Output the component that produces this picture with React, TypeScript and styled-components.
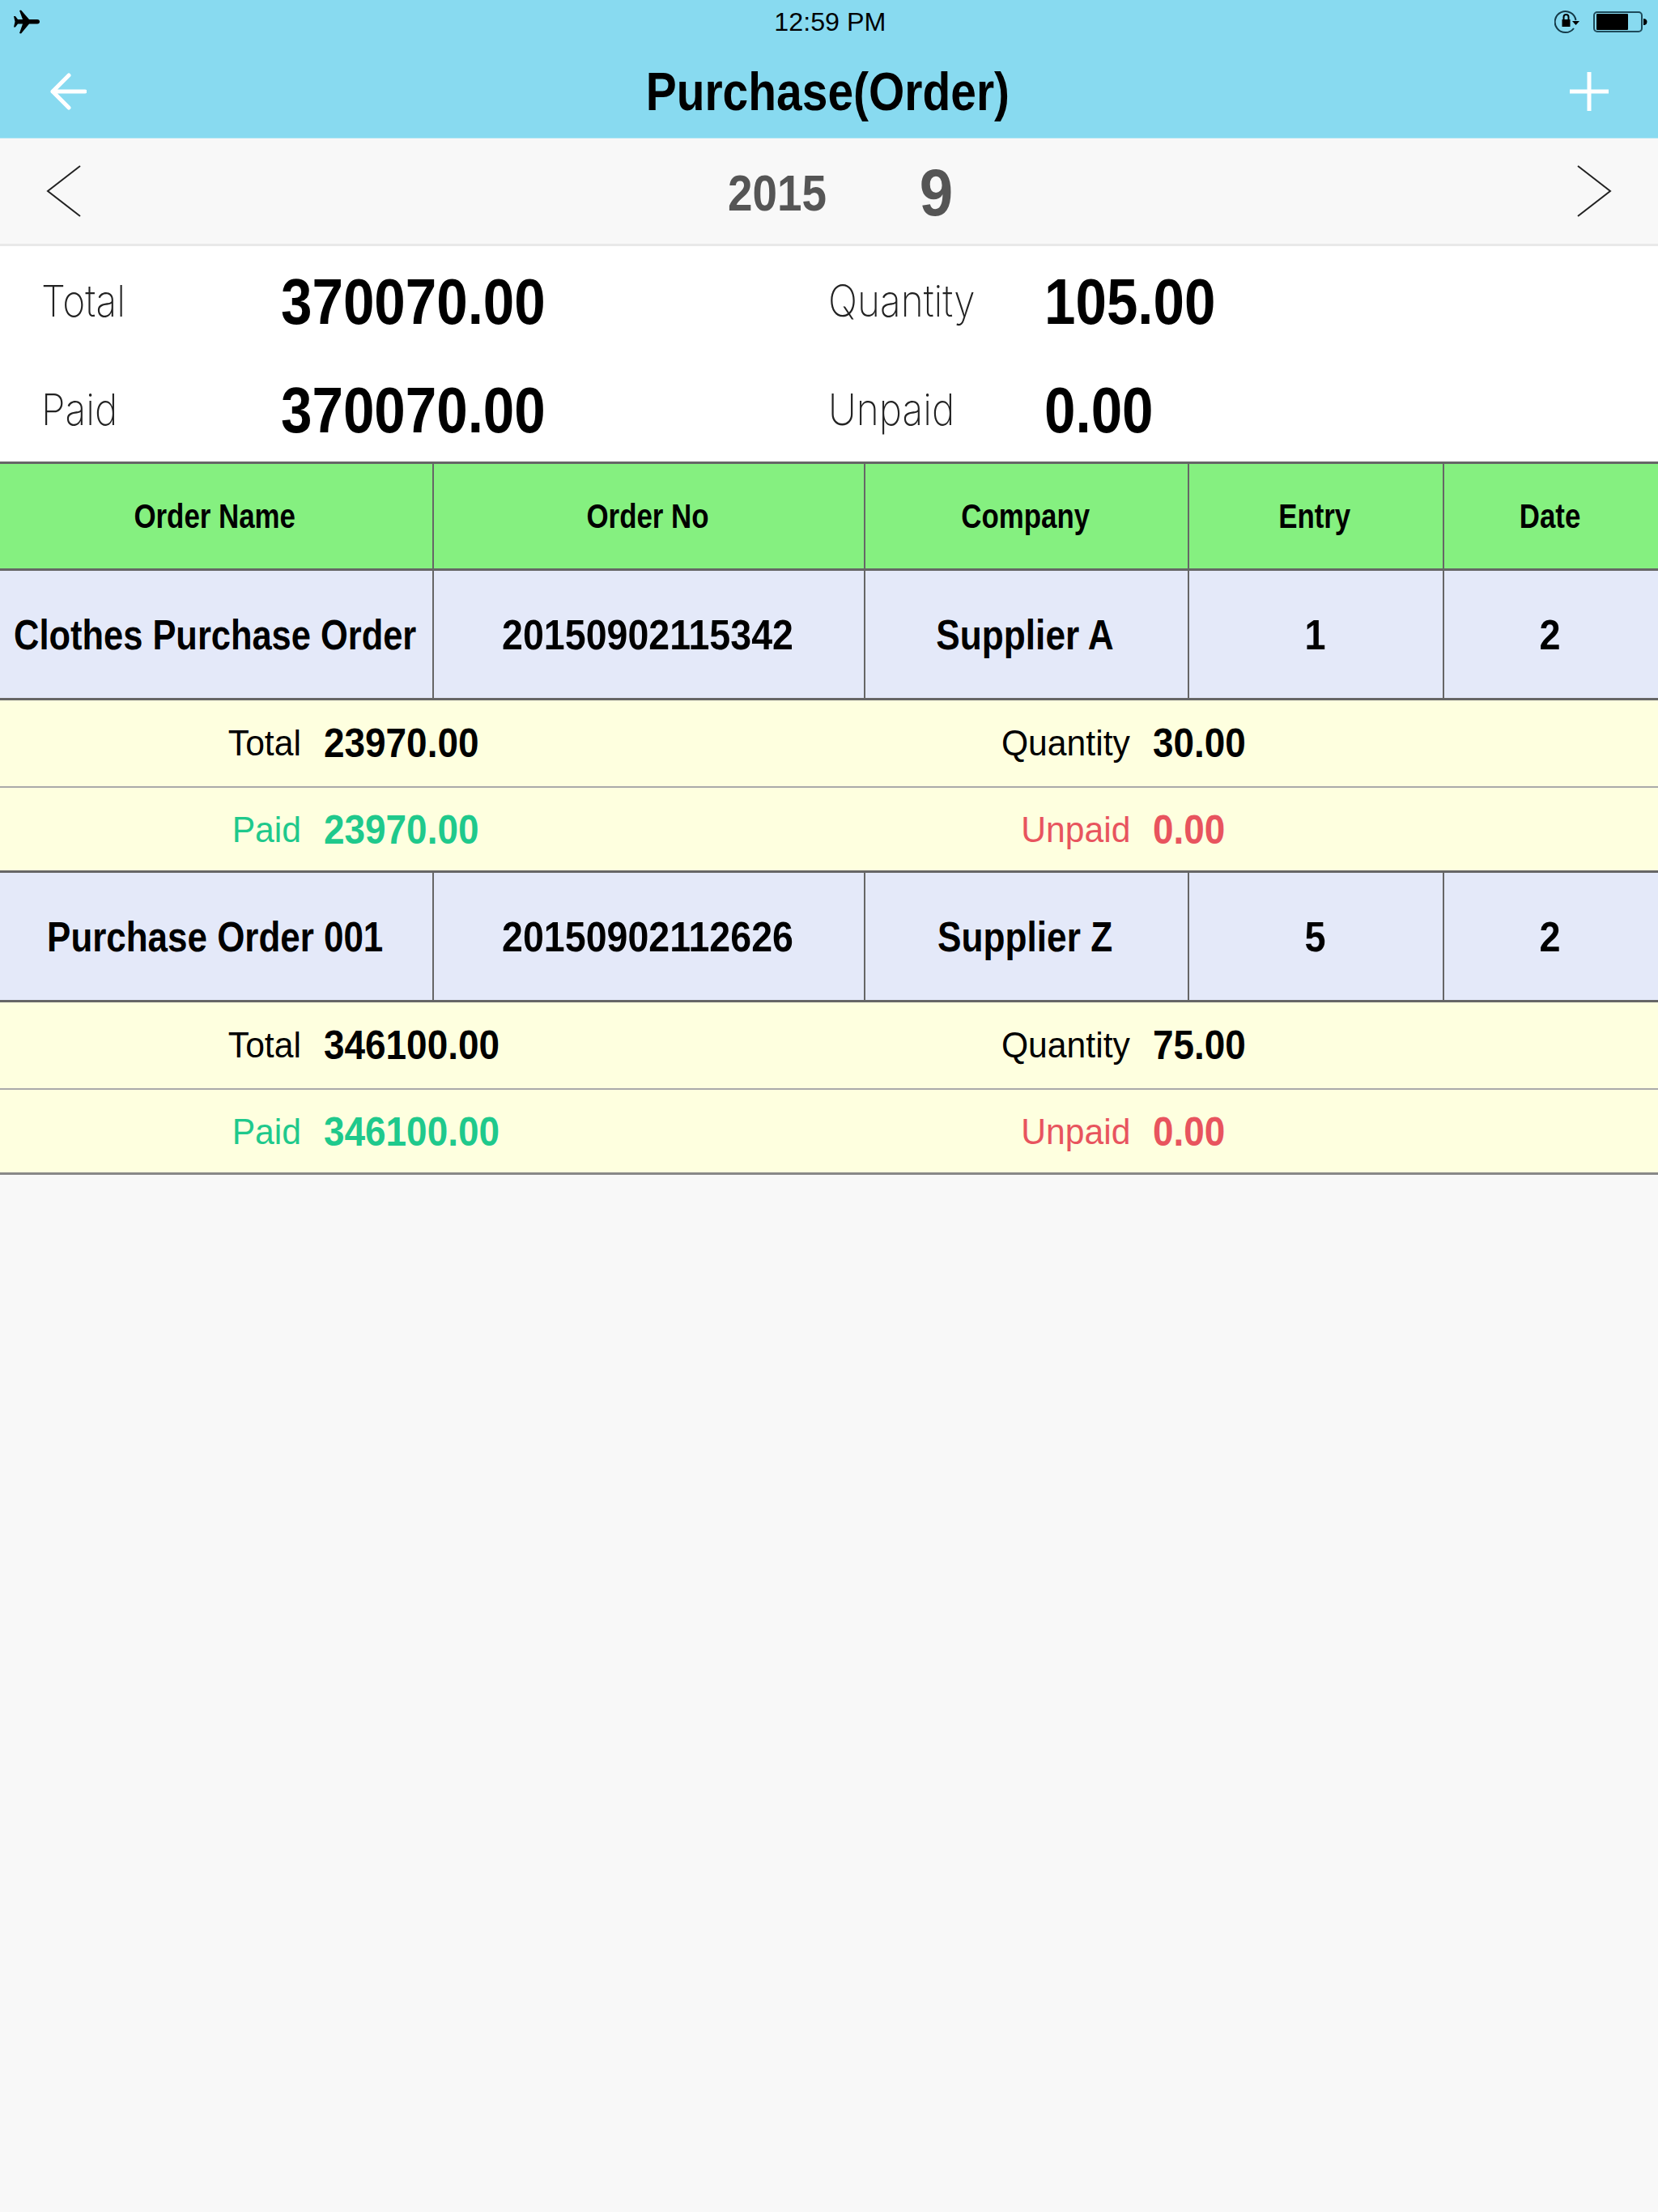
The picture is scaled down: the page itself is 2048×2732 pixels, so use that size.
import React from "react";
import styled, { createGlobalStyle } from "styled-components";

const Global = createGlobalStyle`
  html, body { margin: 0; padding: 0; background: #f8f8f8; }
  body { font-family: "Liberation Sans", Arial, sans-serif; color: #000; }
  * { box-sizing: border-box; }
`;

const Page = styled.div`
  width: 2048px;
  min-height: 2732px;
  background: #f8f8f8;
`;

const Top = styled.header`
  height: 171px;
  background: #88daf0;
  border-bottom: 1px solid #a9e3f3;
`;

const StatusBar = styled.div`
  height: 56px;
  padding: 12px 13px 0 16px;
  display: flex;
  align-items: flex-start;
`;

const StatusSide = styled.div<{ $right?: boolean }>`
  flex: 1;
  display: flex;
  align-items: flex-start;
  justify-content: ${(p) => (p.$right ? "flex-end" : "flex-start")};
  gap: 15px;
`;

const BatteryWrap = styled.div`
  margin-top: 2px;
`;

const NavBar = styled.div`
  height: 114px;
  padding: 0 60px 0 61px;
  display: flex;
  align-items: center;
  justify-content: space-between;
`;

const Squeezed = styled.span<{ $sx: number; $origin?: string }>`
  display: inline-block;
  white-space: nowrap;
  transform: scaleX(${(p) => p.$sx});
  transform-origin: ${(p) => p.$origin ?? "center"} center;
`;

const Clock = styled(Squeezed)`
  font-size: 31px;
  line-height: 36px;
  margin-top: -2px;
`;

const Title = styled(Squeezed)`
  font-size: 67px;
  line-height: 80px;
  font-weight: 700;
`;

const DateBar = styled.div`
  height: 133px;
  padding: 0 56px 0 56px;
  display: flex;
  align-items: center;
  justify-content: space-between;
  border-bottom: 3px solid #e9e9e9;
`;

const DateCenter = styled.div`
  display: flex;
  align-items: center;
  justify-content: center;
  gap: 103px;
  padding: 4px 0 0 21px;
  color: #555;
  font-weight: 700;
`;

const Year = styled(Squeezed)`
  font-size: 63px;
  line-height: 70px;
`;

const Month = styled(Squeezed)`
  font-size: 81px;
  line-height: 90px;
`;

const Summary = styled.section`
  background: #fff;
  padding: 24px 0 18px 51px;
  display: grid;
  grid-template-columns: 296px 676px 267px 1fr;
  grid-template-rows: 90px 90px;
  row-gap: 44px;
  align-items: center;
`;

const SummaryLabel = styled(Squeezed)`
  font-family: Inter, Roboto, "Liberation Sans", sans-serif;
  font-weight: 200;
  font-size: 54px;
  line-height: 60px;
  margin-top: -3px;
  color: #222;
`;

const SummaryValue = styled(Squeezed)`
  font-size: 80px;
  line-height: 90px;
  font-weight: 700;
`;

const TableRow = styled.div<{ $header?: boolean }>`
  display: grid;
  grid-template-columns: 534px 533px 400px 315px 1fr;
  height: ${(p) => (p.$header ? 132 : 160)}px;
  background: ${(p) => (p.$header ? "#85f080" : "#e4e9f9")};
  border-top: 3px solid #666;
`;

const Cell = styled.div`
  display: flex;
  align-items: center;
  justify-content: center;
  padding-right: 3px;
  border-left: 2px solid #666;
  &:first-child { border-left: 0; }
`;

const HeadText = styled(Squeezed)`
  font-size: 42px;
  font-weight: 700;
`;

const CellText = styled(Squeezed)`
  font-size: 52px;
  font-weight: 700;
`;

const Detail = styled.div<{ $h: number; $pad: number; $color: string; $border: string }>`
  height: ${(p) => p.$h}px;
  padding-top: ${(p) => p.$pad}px;
  display: grid;
  grid-template-columns: 372px 652px 372px 1fr;
  align-items: center;
  background: #feffdf;
  color: ${(p) => p.$color};
  border-top: ${(p) => p.$border};
`;

const DetailLabel = styled.div<{ $color?: string }>`
  font-size: 44px;
  text-align: right;
  color: ${(p) => p.$color ?? "inherit"};
`;

const DetailValue = styled.div<{ $color?: string }>`
  padding-left: 28px;
  font-size: 50px;
  font-weight: 700;
  color: ${(p) => p.$color ?? "inherit"};
`;

const Foot = styled.div`
  height: 3px;
  background: #888;
`;

const Airplane = () => (
  <svg width="34" height="31" viewBox="16 12 34 31">
    <path
      d="M49 26.700c0-1.500-1-2.700-3-2.700L36 24 26 12.500 24 13l4 11h-6l-3-4h-2l1.500 6.700L17 33.500h2l3-4h6L24 41l2 .5 10-12h10c2 0 3-1.200 3-2.800z"
      fill="#000"
    />
  </svg>
);

const OrientationLock = () => (
  <svg width="33" height="30" viewBox="0 0 33 30">
    <path d="M26.500 13A13 13 0 1 0 24 23" fill="none" stroke="#143a48" strokeWidth="2" />
    <path d="M22 14h9l-4.500 5z" fill="#000" />
    <rect x="9.500" y="12" width="10" height="9" fill="#000" />
    <path d="M11.500 12V9a3 3 0 0 1 6 0v3" fill="none" stroke="#000" strokeWidth="2" />
  </svg>
);

const Battery = () => (
  <svg width="67" height="26" viewBox="0 0 67 26">
    <rect x="1" y="1" width="59" height="24" rx="4" fill="none" stroke="#1e4a5a" strokeWidth="2" />
    <rect x="4" y="3" width="39" height="20" rx="1" fill="#000" />
    <path d="M62 9c3 0 4.500 2 4.500 4S65 17 62 17z" fill="#000" />
  </svg>
);

const BackArrow = () => (
  <svg width="46" height="46" viewBox="0 0 46 46">
    <path
      d="M24 3L4 23l20 20M4 23h40"
      fill="none"
      stroke="#fff"
      strokeWidth="5"
      strokeLinecap="round"
      strokeLinejoin="round"
    />
  </svg>
);

const PlusIcon = () => (
  <svg width="50" height="50" viewBox="0 0 50 50">
    <path d="M25 1v48M1 25h48" fill="none" stroke="#fff" strokeWidth="5" />
  </svg>
);

const Chevron = ({ right }: { right?: boolean }) => (
  <svg width="46" height="66" viewBox="0 0 46 66">
    <path
      d={right ? "M3 2L43 33 3 64" : "M43 2L3 33 43 64"}
      fill="none"
      stroke="#222"
      strokeWidth="2"
    />
  </svg>
);

type Cellish = [string, number];

const orders: {
  cells: Cellish[];
  total: string;
  quantity: string;
  paid: string;
  unpaid: string;
}[] = [
  {
    cells: [
      ["Clothes Purchase Order", 0.835],
      ["20150902115342", 0.895],
      ["Supplier A", 0.85],
      ["1", 0.9],
      ["2", 0.9],
    ],
    total: "23970.00",
    quantity: "30.00",
    paid: "23970.00",
    unpaid: "0.00",
  },
  {
    cells: [
      ["Purchase Order 001", 0.845],
      ["20150902112626", 0.895],
      ["Supplier Z", 0.85],
      ["5", 0.9],
      ["2", 0.9],
    ],
    total: "346100.00",
    quantity: "75.00",
    paid: "346100.00",
    unpaid: "0.00",
  },
];

const headers = ["Order Name", "Order No", "Company", "Entry", "Date"];

const DetailRow = ({
  h,
  pad,
  color,
  border,
  a,
  b,
  c,
  d,
}: {
  h: number;
  pad: number;
  color: [string, string];
  border: string;
  a: string;
  b: string;
  c: string;
  d: string;
}) => (
  <Detail $h={h} $pad={pad} $color={color[0]} $border={border}>
    <DetailLabel>
      <Squeezed $sx={0.97} $origin="right">{a}</Squeezed>
    </DetailLabel>
    <DetailValue>
      <Squeezed $sx={0.918} $origin="left">{b}</Squeezed>
    </DetailValue>
    <DetailLabel $color={color[1]}>
      <Squeezed $sx={0.97} $origin="right">{c}</Squeezed>
    </DetailLabel>
    <DetailValue $color={color[1]}>
      <Squeezed $sx={0.918} $origin="left">{d}</Squeezed>
    </DetailValue>
  </Detail>
);

export default function App() {
  return (
    <Page>
      <Global />
      <Top>
        <StatusBar>
          <StatusSide>
            <Airplane />
          </StatusSide>
          <Clock $sx={1.04}>12:59 PM</Clock>
          <StatusSide $right>
            <OrientationLock />
            <BatteryWrap>
              <Battery />
            </BatteryWrap>
          </StatusSide>
        </StatusBar>
        <NavBar>
          <BackArrow />
          <Title $sx={0.85}>Purchase(Order)</Title>
          <PlusIcon />
        </NavBar>
      </Top>
      <DateBar>
        <Chevron />
        <DateCenter>
          <Year $sx={0.87}>2015</Year>
          <Month $sx={0.92}>9</Month>
        </DateCenter>
        <Chevron right />
      </DateBar>
      <Summary>
        <SummaryLabel $sx={0.885} $origin="left">Total</SummaryLabel>
        <SummaryValue $sx={0.864} $origin="left">370070.00</SummaryValue>
        <SummaryLabel $sx={0.885} $origin="left">Quantity</SummaryLabel>
        <SummaryValue $sx={0.864} $origin="left">105.00</SummaryValue>
        <SummaryLabel $sx={0.885} $origin="left">Paid</SummaryLabel>
        <SummaryValue $sx={0.864} $origin="left">370070.00</SummaryValue>
        <SummaryLabel $sx={0.885} $origin="left">Unpaid</SummaryLabel>
        <SummaryValue $sx={0.864} $origin="left">0.00</SummaryValue>
      </Summary>
      <TableRow $header>
        {headers.map((h) => (
          <Cell key={h}>
            <HeadText $sx={0.83}>{h}</HeadText>
          </Cell>
        ))}
      </TableRow>
      {orders.map((o) => (
        <React.Fragment key={o.cells[1][0]}>
          <TableRow>
            {o.cells.map(([t, sx], i) => (
              <Cell key={i}>
                <CellText $sx={sx}>{t}</CellText>
              </Cell>
            ))}
          </TableRow>
          <DetailRow
            h={109}
            pad={0}
            color={["#000", "#000"]}
            border="3px solid #666"
            a="Total"
            b={o.total}
            c="Quantity"
            d={o.quantity}
          />
          <DetailRow
            h={104}
            pad={2}
            color={["#1fc98c", "#e8545e"]}
            border="2px solid #aaa"
            a="Paid"
            b={o.paid}
            c="Unpaid"
            d={o.unpaid}
          />
        </React.Fragment>
      ))}
      <Foot />
    </Page>
  );
}
